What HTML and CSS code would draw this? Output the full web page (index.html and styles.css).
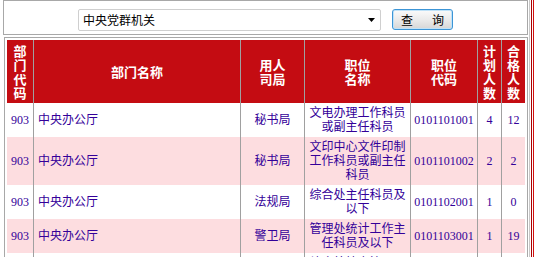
FILE: index.html
```html
<!DOCTYPE html>
<html lang="zh-CN">
<head>
<meta charset="utf-8">
<title>职位查询</title>
<link rel="stylesheet" href="styles.css">
</head>
<body>
<div class="page">
  <div class="main">
    <div class="search-box">
      <div class="select">
        <span class="select-text">中央党群机关</span>
        <svg class="select-arrow" width="7" height="4" viewBox="0 0 7 4"><polygon points="0,0 7,0 3.5,4" fill="#000"/></svg>
      </div>
      <div class="btn"><span>查</span><span>询</span></div>
    </div>
    <div class="table-wrap">
      <table class="grid">
        <colgroup>
          <col class="c1"><col class="c2"><col class="c3"><col class="c4"><col class="c5"><col class="c6"><col class="c7">
        </colgroup>
        <thead>
          <tr class="head">
            <th>部<br>门<br>代<br>码</th>
            <th>部门名称</th>
            <th>用人<br>司局</th>
            <th>职位<br>名称</th>
            <th>职位<br>代码</th>
            <th>计<br>划<br>人<br>数</th>
            <th>合<br>格<br>人<br>数</th>
          </tr>
        </thead>
        <tbody>
          <tr>
            <td class="num">903</td>
            <td class="name">中央办公厅</td>
            <td class="ctr">秘书局</td>
            <td class="ctr">文电办理工作科员<br>或副主任科员</td>
            <td class="num">0101101001</td>
            <td class="num">4</td>
            <td class="num">12</td>
          </tr>
          <tr class="alt">
            <td class="num">903</td>
            <td class="name">中央办公厅</td>
            <td class="ctr">秘书局</td>
            <td class="ctr">文印中心文件印制<br>工作科员或副主任<br>科员</td>
            <td class="num">0101101002</td>
            <td class="num">2</td>
            <td class="num">2</td>
          </tr>
          <tr>
            <td class="num">903</td>
            <td class="name">中央办公厅</td>
            <td class="ctr">法规局</td>
            <td class="ctr">综合处主任科员及<br>以下</td>
            <td class="num">0101102001</td>
            <td class="num">1</td>
            <td class="num">0</td>
          </tr>
          <tr class="alt">
            <td class="num">903</td>
            <td class="name">中央办公厅</td>
            <td class="ctr">警卫局</td>
            <td class="ctr">管理处统计工作主<br>任科员及以下</td>
            <td class="num">0101103001</td>
            <td class="num">1</td>
            <td class="num">19</td>
          </tr>
          <tr>
            <td class="num">903</td>
            <td class="name">中央办公厅</td>
            <td class="ctr">警卫局</td>
            <td class="ctr">综合处档案管理工<br>作主任科员及以下<br>科员</td>
            <td class="num">0101103002</td>
            <td class="num">1</td>
            <td class="num">5</td>
          </tr>
        </tbody>
      </table>
    </div>
  </div>
  <div class="edge"></div>
</div>
</body>
</html>
```
FILE: styles.css
```css
html, body {
  margin: 0;
  padding: 0;
  overflow: hidden;
  background: #fff;
}

body {
  font-family: "Liberation Serif", "Noto Sans CJK SC", serif;
  font-size: 12px;
}

.page {
  display: flex;
  width: 535px;
  height: 257px;
  overflow: hidden;
}

.main {
  width: 529px;
  flex: none;
}

.edge {
  width: 6px;
  flex: none;
  background: linear-gradient(to right,
    #c8c8c8 0 1px, #fff 1px 2px,
    #a80000 2px 3px, #fff 3px 4px,
    #d01010 4px 5px, #fff 5px 6px);
}

/* search bar */
.search-box {
  box-sizing: border-box;
  width: 525px;
  height: 35px;
  margin-left: 3px;
  border: 1px solid #a8a8a8;
  display: flex;
  align-items: flex-start;
  padding: 8px 0 0 74px;
}

.select {
  box-sizing: border-box;
  width: 303px;
  height: 22px;
  border: 1px solid #cfcfcf;
  border-radius: 2px;
  display: flex;
  align-items: center;
  justify-content: space-between;
  padding: 0 5px 0 4px;
  font-family: "Noto Sans CJK SC", sans-serif;
  font-size: 12px;
  color: #000;
  line-height: 14px;
}

.select-arrow {
  display: block;
}

.btn {
  box-sizing: border-box;
  width: 61px;
  height: 21px;
  margin-left: 11px;
  border: 1px solid #3c95d6;
  border-radius: 3px;
  background: linear-gradient(#fbfbfb, #e9e9e9 55%, #d6d6d6);
  box-shadow: inset 0 0 0 1px #bfe2f8;
  display: flex;
  align-items: center;
  justify-content: center;
  gap: 19px;
  font-family: "Noto Sans CJK SC", sans-serif;
  font-size: 12px;
  line-height: 14px;
  color: #000;
}

/* table */
.table-wrap {
  box-sizing: border-box;
  width: 524px;
  margin: 2px 0 0 4px;
  border: 1px solid #a8a8a8;
  padding: 2px;
}

.grid {
  width: 518px;
  table-layout: fixed;
  border-collapse: separate;
  border-spacing: 0;
}

.c1 { width: 26px; }
.c2 { width: 207px; }
.c3 { width: 64px; }
.c4 { width: 106px; }
.c5 { width: 67px; }
.c6 { width: 24px; }
.c7 { width: 24px; }

.grid th,
.grid td {
  padding: 3px 0;
  line-height: 14px;
  vertical-align: middle;
  border-left: 1px solid #a0a0a0;
  overflow: hidden;
  white-space: nowrap;
}

.grid th:first-child,
.grid td:first-child {
  border-left: none;
}

.head th {
  height: 57px;
  background: #c40c12;
  color: #fff;
  font-family: "Noto Sans CJK SC", sans-serif;
  font-weight: bold;
  font-size: 13px;
  text-align: center;
}

.grid td {
  color: #330099;
  text-align: center;
}

.grid td.name {
  text-align: left;
  padding-left: 4px;
}

.grid tr.alt td {
  background: #fddde0;
}
```
